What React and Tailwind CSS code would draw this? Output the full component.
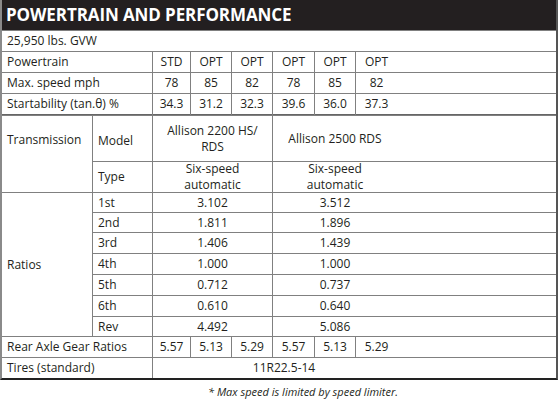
import React from "react";

const C = ({ className = "", children }) => (
  <div className={"bg-white flex items-center " + className}>{children}</div>
);

const L = ({ className = "", children }) => (
  <C className={"px-[5px] " + className}>{children}</C>
);

const N = ({ className = "", children }) => (
  <C className={"justify-center " + className}>{children}</C>
);

const Last = ({ className = "", children }) => (
  <C className={className}>
    <div className="w-[41px] text-center">{children}</div>
  </C>
);

const cols = ["col-start-3", "col-start-4", "col-start-5", "col-start-6", "col-start-7"];

function ValRow({ row, vals, extra = "" }) {
  return (
    <>
      {vals.slice(0, 5).map((v, i) => (
        <N key={i} className={`${cols[i]} ${row} ${extra}`}>{v}</N>
      ))}
      <Last className={`col-start-8 ${row} ${extra}`}>{vals[5]}</Last>
    </>
  );
}

const gears = [
  ["1st", "3.102", "3.512", "row-start-7"],
  ["2nd", "1.811", "1.896", "row-start-8"],
  ["3rd", "1.406", "1.439", "row-start-9"],
  ["4th", "1.000", "1.000", "row-start-10"],
  ["5th", "0.712", "0.737", "row-start-11"],
  ["6th", "0.610", "0.640", "row-start-12"],
  ["Rev", "4.492", "5.086", "row-start-13"],
];

export default function App() {
  return (
    <div
      className="w-[560px] h-[415px] bg-white text-[#231f20] text-[12px] leading-[16px]"
      style={{ fontFamily: '"Open Sans", "Noto Sans", sans-serif' }}
    >
      <div className="w-[558px] border-l-2 border-r-2 border-l-[#8a8a8a] border-r-[#555] border-b-2 border-b-[#222]">
        <div className="h-[30px] bg-[#231f20] flex items-center px-[4px] text-white font-bold text-[17px] tracking-[-0.1px]">
          POWERTRAIN AND PERFORMANCE
        </div>
        <div className="grid pt-px gap-px bg-[#808080] grid-cols-[90px_59px_37px_40px_40px_41px_40px_200px] grid-rows-[20px_20px_20px_21px_45px_30px_19px_19px_20px_20px_20px_20px_19px_20px_20px]">
          <L className="col-start-1 col-span-8 row-start-1">25,950 lbs. GVW</L>

          <L className="col-start-1 col-span-2 row-start-2">Powertrain</L>
          <ValRow row="row-start-2" vals={["STD", "OPT", "OPT", "OPT", "OPT", "OPT"]} />

          <L className="col-start-1 col-span-2 row-start-3">Max. speed mph</L>
          <ValRow row="row-start-3" vals={["78", "85", "82", "78", "85", "82"]} />

          <L className="col-start-1 col-span-2 row-start-4 border-b border-[#666]">Startability (tan.θ) %</L>
          <ValRow
            row="row-start-4"
            extra="border-b border-[#666]"
            vals={["34.3", "31.2", "32.3", "39.6", "36.0", "37.3"]}
          />

          <C className="col-start-1 row-start-5 row-span-2 items-start px-[5px] pt-[16px]">Transmission</C>
          <L className="col-start-2 row-start-5 pt-[4px]">Model</L>
          <N className="col-start-3 col-span-3 row-start-5 text-center">
            <div>
              Allison 2200 HS/
              <br />
              RDS
            </div>
          </N>
          <C className="col-start-6 col-span-3 row-start-5">
            <div className="w-[124px] text-center">Allison 2500 RDS</div>
          </C>
          <L className="col-start-2 row-start-6">Type</L>
          <N className="col-start-3 col-span-3 row-start-6 text-center">
            <div>
              Six-speed
              <br />
              automatic
            </div>
          </N>
          <C className="col-start-6 col-span-3 row-start-6">
            <div className="w-[124px] text-center">
              Six-speed
              <br />
              automatic
            </div>
          </C>

          <L className="col-start-1 row-start-7 row-span-7">Ratios</L>
          {gears.map(([g, a, b, r]) => (
            <React.Fragment key={g}>
              <L className={`col-start-2 ${r}`}>{g}</L>
              <N className={`col-start-3 col-span-3 ${r}`}>{a}</N>
              <C className={`col-start-6 col-span-3 ${r}`}>
                <div className="w-[124px] text-center">{b}</div>
              </C>
            </React.Fragment>
          ))}

          <L className="col-start-1 col-span-2 row-start-14">Rear Axle Gear Ratios</L>
          <ValRow row="row-start-14" vals={["5.57", "5.13", "5.29", "5.57", "5.13", "5.29"]} />

          <L className="col-start-1 col-span-2 row-start-15">Tires (standard)</L>
          <C className="col-start-3 col-span-6 row-start-15">
            <div className="w-[262px] text-center">11R22.5-14</div>
          </C>
        </div>
      </div>
      <div className="pl-[208px] pt-[5px] italic text-[11px] leading-[14px]">
        * Max speed is limited by speed limiter.
      </div>
    </div>
  );
}
